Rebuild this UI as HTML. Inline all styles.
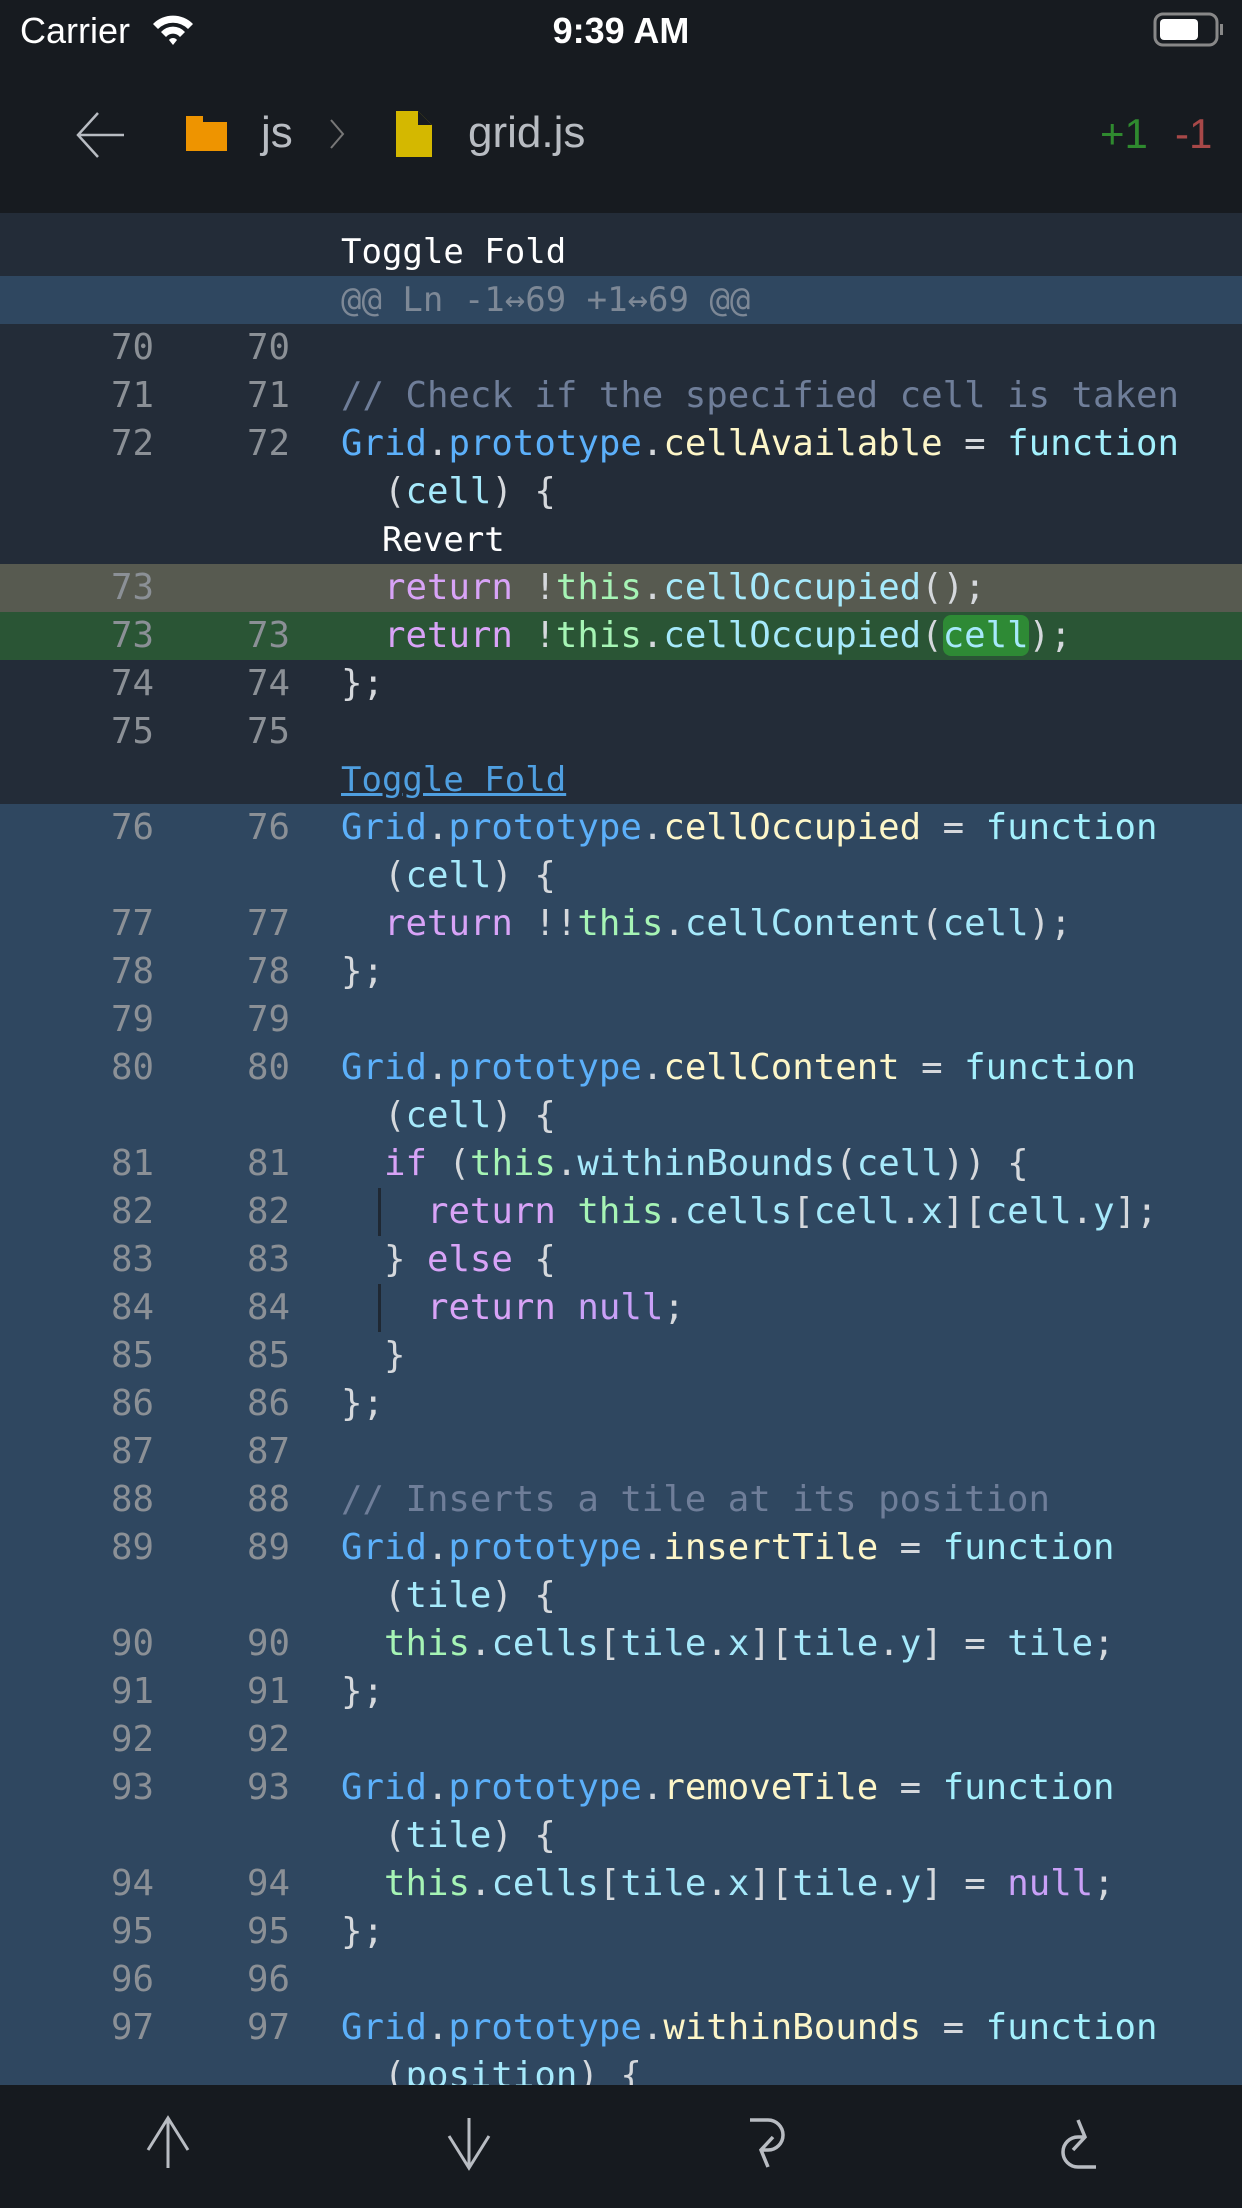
<!DOCTYPE html>
<html><head><meta charset="utf-8"><style>
*{margin:0;padding:0;box-sizing:border-box}
body{width:1242px;height:2208px;overflow:hidden;background:#232c38;font-family:"DejaVu Sans Mono","Liberation Mono",monospace;position:relative}
#top{position:absolute;left:0;top:0;width:1242px;height:213px;background:#171b20}
.sb{position:absolute;font-family:"Liberation Sans",sans-serif;color:#fff;font-size:36px}
.code{position:absolute;left:0;top:213px;width:1242px}
.r{height:48px;line-height:48px;font-size:35.7px;white-space:pre;position:relative;color:#d5d8dc}
.r .a,.r .b{position:absolute;width:80px;text-align:right;color:#8b9096}
.r .a{left:74px}.r .b{left:210px}
.r .t{position:absolute;left:341px}
.blue{background:#2f4760}
.del{background:#575a50}.add{background:#2a5535}
.g{color:#5cb0fa}.m{color:#fdf6c8}.f{color:#a3f0fd}.c{color:#6f7e99}.k{color:#d8a3f7}.h{color:#a6f4b5}.v{color:#a6e9fb}.n{color:#c9a0f7}.w{color:#fff}
.hl{background:#2e8a35;border-radius:8px}
.guide{position:absolute;left:378px;top:0;width:3px;height:48px;background:#1f2833}
#bot{position:absolute;left:0;top:2085px;width:1242px;height:123px;background:#161a1f}
</style></head><body>
<div id="top">
<div class="sb" style="left:20px;top:10px">Carrier</div>
<svg style="position:absolute;left:150px;top:12px" width="46" height="36" viewBox="0 0 46 36"><path d="M3 12 A28 28 0 0 1 43 12 L38 17 A21 21 0 0 0 8 17Z M11 20 A16 16 0 0 1 35 20 L30 25 A9 9 0 0 0 16 25Z M19 28 A5 5 0 0 1 27 28 L23 33Z" fill="#fff"/></svg>
<div class="sb" style="left:0;width:1242px;text-align:center;top:10px;font-weight:bold;font-size:36px">9:39 AM</div>
<svg style="position:absolute;left:1153px;top:12px" width="72" height="36" viewBox="0 0 72 36"><rect x="2" y="2" width="62" height="31" rx="8" fill="none" stroke="#888" stroke-width="3"/><rect x="7" y="7" width="38" height="21" rx="4" fill="#fff"/><rect x="67" y="12" width="3" height="11" fill="#888"/></svg>
<svg style="position:absolute;left:74px;top:110px" width="54" height="50" viewBox="0 0 54 50"><path d="M50 25 H6 M24 3 L4 25 L24 47" fill="none" stroke="#b8bcc2" stroke-width="2.5"/></svg>
<svg style="position:absolute;left:186px;top:116px" width="41" height="35" viewBox="0 0 41 35"><path d="M0 0 H17 V6 H41 V35 H0Z" fill="#ee9400"/></svg>
<div class="sb" style="left:261px;top:108px;font-size:44px;color:#b8bcc2">js</div>
<svg style="position:absolute;left:328px;top:118px" width="18" height="32" viewBox="0 0 18 32"><path d="M3 2 L15 16 L3 30" fill="none" stroke="#777" stroke-width="2"/></svg>
<svg style="position:absolute;left:396px;top:111px" width="36" height="46" viewBox="0 0 36 46"><path d="M0 0 H22 L36 14 V46 H0Z" fill="#d4b800"/><path d="M22 0 V14 H36Z" fill="#171b20"/></svg>
<div class="sb" style="left:468px;top:108px;font-size:44px;color:#b8bcc2">grid.js</div>
<div class="sb" style="left:1100px;top:110px;font-size:42px;color:#2f8a2f">+1</div>
<div class="sb" style="left:1175px;top:110px;font-size:42px;color:#a84848">-1</div>
</div>
<div class="code">
<div class="r" style="height:63px;line-height:78px"><span class="t w" style="font-size:34px">Toggle Fold</span></div>
<div class="r blue"><span class="t" style="color:#7d8896;font-size:34px">@@ Ln -1↔69 +1↔69 @@</span></div>
<div class="r"><span class="a">70</span><span class="b">70</span></div>
<div class="r"><span class="a">71</span><span class="b">71</span><span class="t c">// Check if the specified cell is taken</span></div>
<div class="r"><span class="a">72</span><span class="b">72</span><span class="t"><span class="g">Grid</span>.<span class="g">prototype</span>.<span class="m">cellAvailable</span> = <span class="f">function</span></span></div>
<div class="r"><span class="t">  (<span class="v">cell</span>) {</span></div>
<div class="r"><span class="t w" style="font-size:34px">  Revert</span></div>
<div class="r del"><span class="a">73</span><span class="t">  <span class="k">return</span> !<span class="h">this</span>.<span class="v">cellOccupied</span>();</span></div>
<div class="r add"><span class="a">73</span><span class="b">73</span><span class="t">  <span class="k">return</span> !<span class="h">this</span>.<span class="v">cellOccupied</span>(<span class="v hl">cell</span>);</span></div>
<div class="r"><span class="a">74</span><span class="b">74</span><span class="t">};</span></div>
<div class="r"><span class="a">75</span><span class="b">75</span></div>
<div class="r"><span class="t" style="color:#4f9fe0;text-decoration:underline;font-size:34px">Toggle Fold</span></div>
<div class="blue">
<div class="r"><span class="a">76</span><span class="b">76</span><span class="t"><span class="g">Grid</span>.<span class="g">prototype</span>.<span class="m">cellOccupied</span> = <span class="f">function</span></span></div>
<div class="r"><span class="t">  (<span class="v">cell</span>) {</span></div>
<div class="r"><span class="a">77</span><span class="b">77</span><span class="t">  <span class="k">return</span> !!<span class="h">this</span>.<span class="v">cellContent</span>(<span class="v">cell</span>);</span></div>
<div class="r"><span class="a">78</span><span class="b">78</span><span class="t">};</span></div>
<div class="r"><span class="a">79</span><span class="b">79</span></div>
<div class="r"><span class="a">80</span><span class="b">80</span><span class="t"><span class="g">Grid</span>.<span class="g">prototype</span>.<span class="m">cellContent</span> = <span class="f">function</span></span></div>
<div class="r"><span class="t">  (<span class="v">cell</span>) {</span></div>
<div class="r"><span class="a">81</span><span class="b">81</span><span class="t">  <span class="k">if</span> (<span class="h">this</span>.<span class="v">withinBounds</span>(<span class="v">cell</span>)) {</span></div>
<div class="r"><span class="guide"></span><span class="a">82</span><span class="b">82</span><span class="t">    <span class="k">return</span> <span class="h">this</span>.<span class="v">cells</span>[<span class="v">cell</span>.<span class="v">x</span>][<span class="v">cell</span>.<span class="v">y</span>];</span></div>
<div class="r"><span class="a">83</span><span class="b">83</span><span class="t">  } <span class="k">else</span> {</span></div>
<div class="r"><span class="guide"></span><span class="a">84</span><span class="b">84</span><span class="t">    <span class="k">return</span> <span class="n">null</span>;</span></div>
<div class="r"><span class="a">85</span><span class="b">85</span><span class="t">  }</span></div>
<div class="r"><span class="a">86</span><span class="b">86</span><span class="t">};</span></div>
<div class="r"><span class="a">87</span><span class="b">87</span></div>
<div class="r"><span class="a">88</span><span class="b">88</span><span class="t c">// Inserts a tile at its position</span></div>
<div class="r"><span class="a">89</span><span class="b">89</span><span class="t"><span class="g">Grid</span>.<span class="g">prototype</span>.<span class="m">insertTile</span> = <span class="f">function</span></span></div>
<div class="r"><span class="t">  (<span class="v">tile</span>) {</span></div>
<div class="r"><span class="a">90</span><span class="b">90</span><span class="t">  <span class="h">this</span>.<span class="v">cells</span>[<span class="v">tile</span>.<span class="v">x</span>][<span class="v">tile</span>.<span class="v">y</span>] = <span class="v">tile</span>;</span></div>
<div class="r"><span class="a">91</span><span class="b">91</span><span class="t">};</span></div>
<div class="r"><span class="a">92</span><span class="b">92</span></div>
<div class="r"><span class="a">93</span><span class="b">93</span><span class="t"><span class="g">Grid</span>.<span class="g">prototype</span>.<span class="m">removeTile</span> = <span class="f">function</span></span></div>
<div class="r"><span class="t">  (<span class="v">tile</span>) {</span></div>
<div class="r"><span class="a">94</span><span class="b">94</span><span class="t">  <span class="h">this</span>.<span class="v">cells</span>[<span class="v">tile</span>.<span class="v">x</span>][<span class="v">tile</span>.<span class="v">y</span>] = <span class="n">null</span>;</span></div>
<div class="r"><span class="a">95</span><span class="b">95</span><span class="t">};</span></div>
<div class="r"><span class="a">96</span><span class="b">96</span></div>
<div class="r"><span class="a">97</span><span class="b">97</span><span class="t"><span class="g">Grid</span>.<span class="g">prototype</span>.<span class="m">withinBounds</span> = <span class="f">function</span></span></div>
<div class="r"><span class="t">  (<span class="v">position</span>) {</span></div>
<div class="r"></div>
</div>
</div>
<div id="bot">
<svg style="position:absolute;left:140px;top:30px" width="56" height="56" viewBox="0 0 56 56"><path d="M28 53 V3 M8 35 L28 3 L48 35" fill="none" stroke="#b8bcc2" stroke-width="3"/></svg>
<svg style="position:absolute;left:441px;top:30px" width="56" height="56" viewBox="0 0 56 56"><path d="M28 3 V53 M8 21 L28 53 L48 21" fill="none" stroke="#b8bcc2" stroke-width="3"/></svg>
<svg style="position:absolute;left:748px;top:30px" width="50" height="56" viewBox="0 0 50 56"><path d="M2 5 H20 A15 15 0 0 1 20 35 H15 M25 22 L13 35 L20 52" fill="none" stroke="#b8bcc2" stroke-width="3.5"/></svg>
<svg style="position:absolute;left:1048px;top:30px" width="50" height="56" viewBox="0 0 50 56"><path d="M48 52 H30 A15 15 0 0 1 30 22 H35 M25 35 L37 22 L30 5" fill="none" stroke="#b8bcc2" stroke-width="3.5"/></svg>
</div>
</body></html>
